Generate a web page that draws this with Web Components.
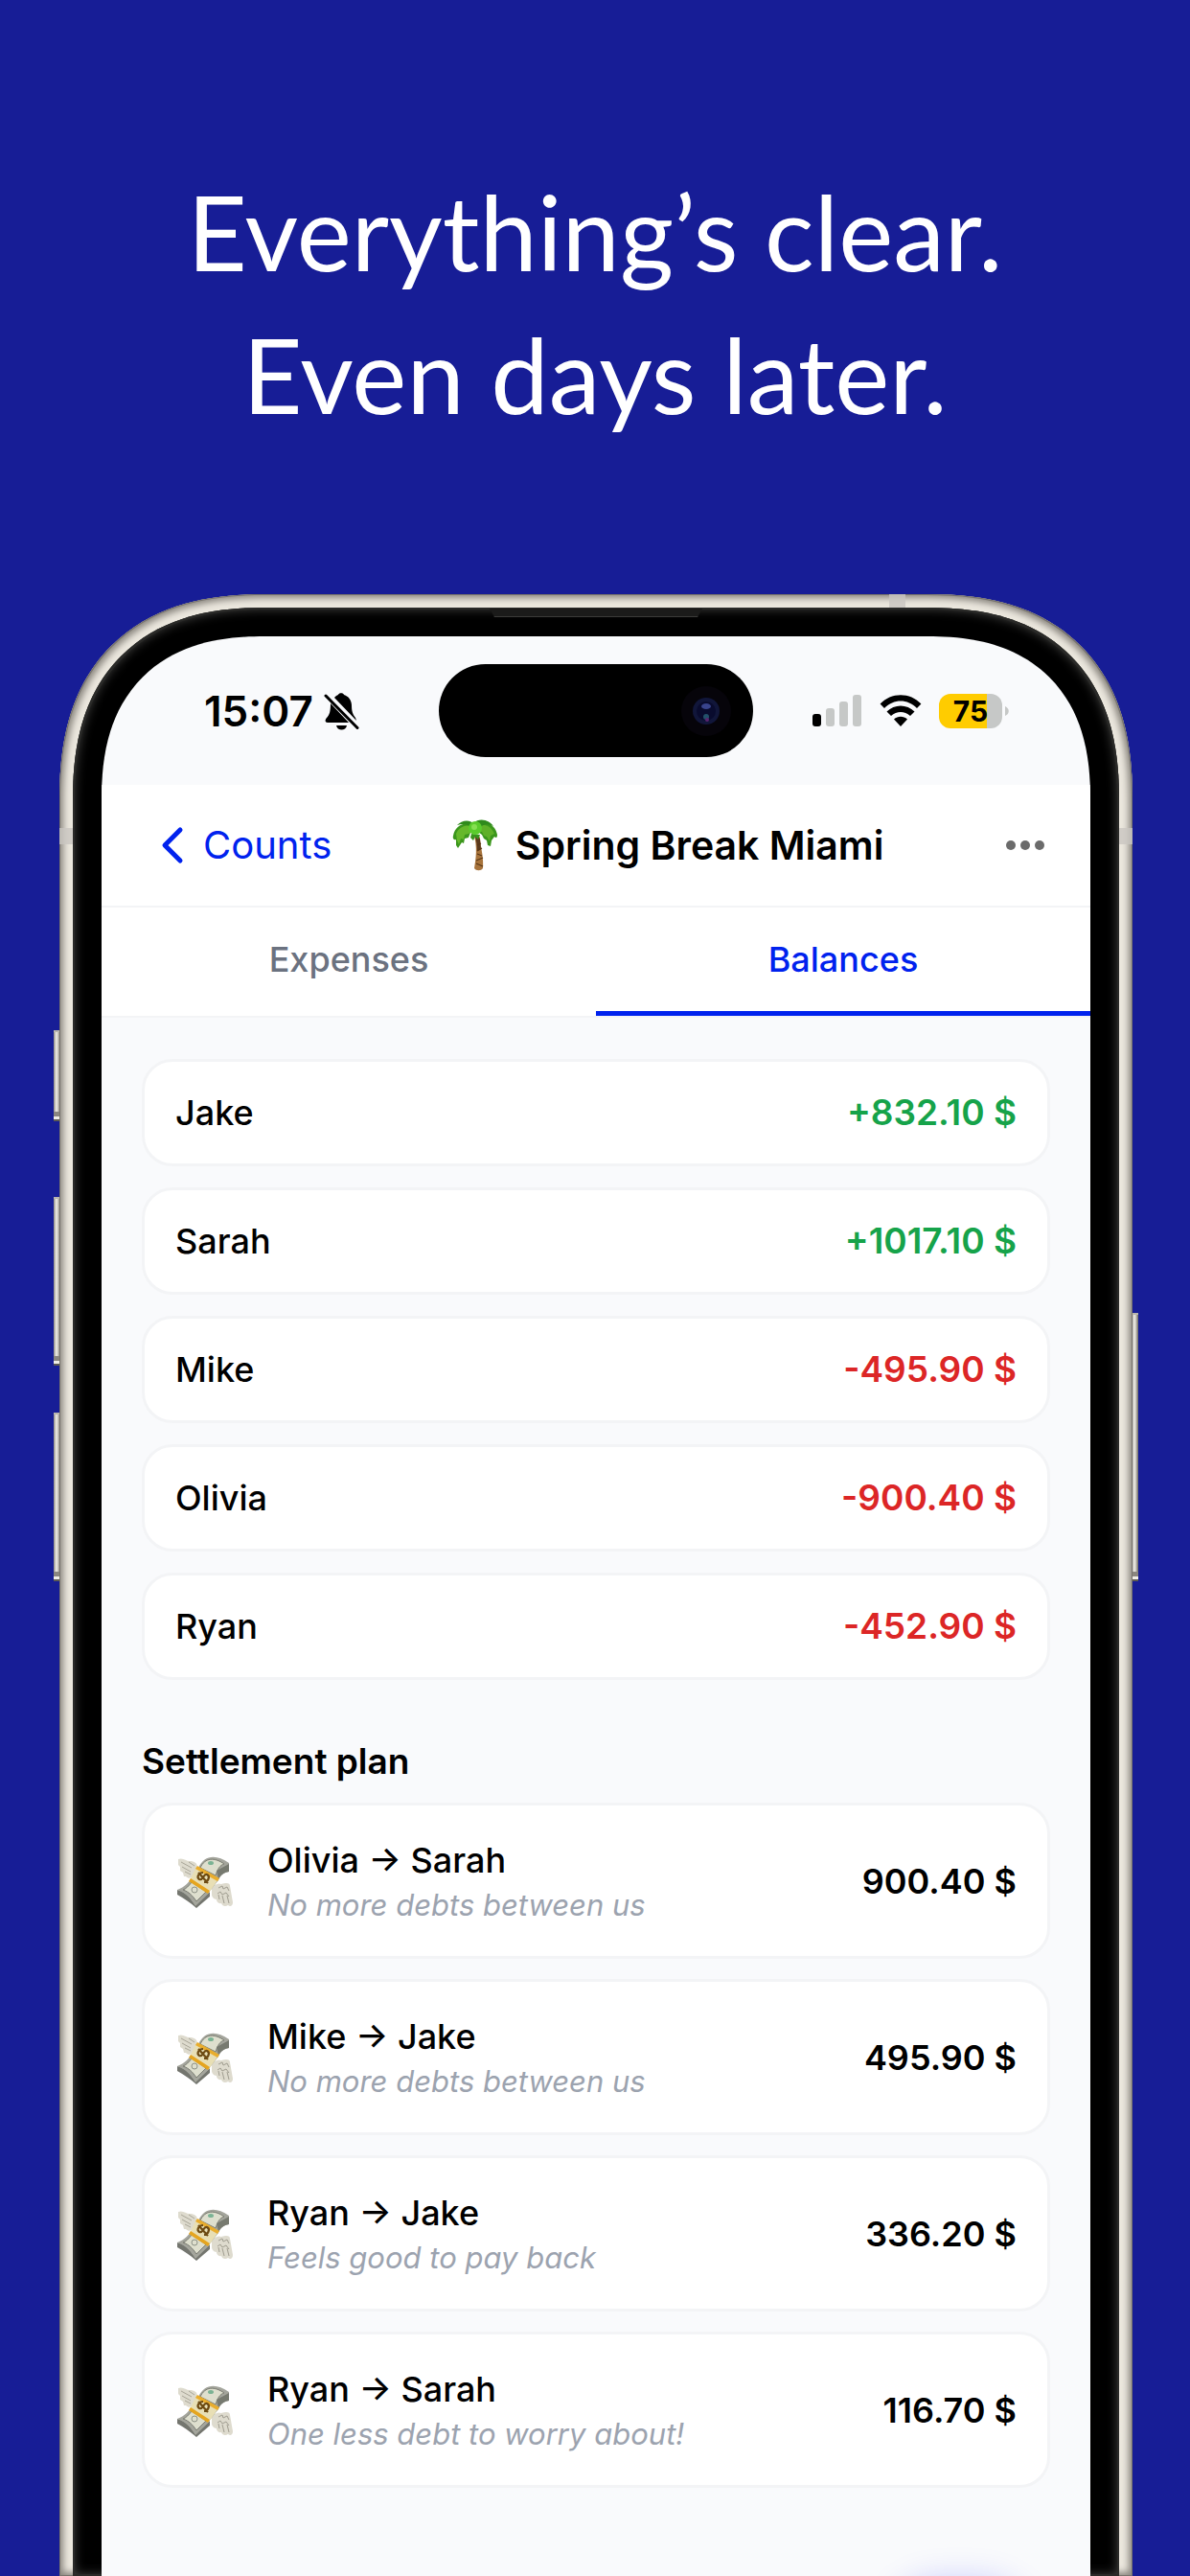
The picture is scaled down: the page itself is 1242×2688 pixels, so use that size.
<!DOCTYPE html>
<html lang="en">
<head>
<meta charset="utf-8">
<meta name="viewport" content="width=device-width, initial-scale=1">
<title>Spring Break Miami</title>
<style>
  html, body { margin: 0; min-height: 100vh; }
  body {
    display: flex;
    background: #171d96;
    color: #000;
    font-family: Inter, "Liberation Sans", sans-serif;
  }
</style>
</head>
<body>
<promo-page></promo-page>

<script>
class PromoPage extends HTMLElement {
  constructor() {
    super();
    this.attachShadow({ mode: 'open' });
    this.shadowRoot.innerHTML = `
      <style>
        :host { display: flex; flex-direction: column; flex: 1; height: 100vh; overflow: hidden; }
        h1 {
          margin: 0;
          padding: 167px 40px 155px;
          color: #fff;
          font: 400 108px/149px Lato, "Open Sans", sans-serif;
          text-align: center;
        }
        main { flex: 1; padding: 43px 42px 0; }
        ul { display: flex; flex-direction: column; gap: 21px; margin: 0; padding: 0; list-style: none; }
        .balances { gap: 22px; }
        h2 { margin: 62px 0 20px; font-size: 37px; line-height: 46px; font-weight: 600; }
      </style>
      <h1>Everything’s clear.<br>Even days later.</h1>
      <phone-frame>
        <status-bar time="15:07" battery="75"></status-bar>
        <nav-header back="Counts">Spring Break Miami</nav-header>
        <tab-bar></tab-bar>
        <main>
          <ul class="balances">
            <li><balance-row amount="+832.10 $">Jake</balance-row></li>
            <li><balance-row amount="+1017.10 $">Sarah</balance-row></li>
            <li><balance-row amount="-495.90 $">Mike</balance-row></li>
            <li><balance-row amount="-900.40 $">Olivia</balance-row></li>
            <li><balance-row amount="-452.90 $">Ryan</balance-row></li>
          </ul>
          <h2>Settlement plan</h2>
          <ul>
            <li><settlement-row amount="900.40 $" note="No more debts between us">Olivia → Sarah</settlement-row></li>
            <li><settlement-row amount="495.90 $" note="No more debts between us">Mike → Jake</settlement-row></li>
            <li><settlement-row amount="336.20 $" note="Feels good to pay back">Ryan → Jake</settlement-row></li>
            <li><settlement-row amount="116.70 $" note="One less debt to worry about!">Ryan → Sarah</settlement-row></li>
          </ul>
        </main>
      </phone-frame>
    `;
  }
}

class PhoneFrame extends HTMLElement {
  constructor() {
    super();
    this.attachShadow({ mode: 'open' });
    this.shadowRoot.innerHTML = `
      <style>
        :host { position: relative; display: flex; flex: 1; margin: 0 60px 0 62px; }
        .body, .bezel, .screen { display: flex; flex: 1; flex-direction: column; }
        .body {
          position: relative;
          padding: 14px 14px 0;
          border-radius: 185px 185px 0 0;
          background: #ebe7de;
          box-shadow: inset 0 0 0 1px #77736d, inset 0 0 7px 4px #8a867f;
        }
        .bezel {
          position: relative;
          padding: 30px 30px 0;
          border-radius: 171px 171px 0 0;
          background: #000;
          box-shadow: inset 0 0 0 2px #2a2a28, inset 0 0 12px 1px #4a4a48;
        }
        .screen {
          position: relative;
          border-radius: 140px 140px 0 0;
          overflow: hidden;
          background: #f9fafc;
        }
        @supports (corner-shape: superellipse(1.2)) {
          .body { border-radius: 215px 215px 0 0; corner-shape: superellipse(1.26); }
          .bezel { border-radius: 201px 201px 0 0; corner-shape: superellipse(1.26); }
          .screen { border-radius: 170px 170px 0 0; corner-shape: superellipse(1.26); }
        }
        .key {
          position: absolute;
          width: 7px;
          background: linear-gradient(90deg, #8d8983, #efede6 40%, #d5d2ca 60%, #6d6963);
          box-shadow: inset 0 2px 0 #b9b6ae, inset 0 -2px 0 #5c5954, inset 0 -5px 0 #efede6, inset 0 -10px 0 #8a867f;
        }
        .left { left: -6px; }
        .right { right: -6px; }
        .mute { top: 455px; height: 95px; }
        .up { top: 629px; height: 176px; }
        .down { top: 854px; height: 176px; }
        .power { top: 750px; height: 280px; }
        .band { position: absolute; background: #c9c6c0cc; }
        .band.top { top: 0; right: 237px; width: 17px; height: 14px; }
        .band.west { left: 0; top: 244px; width: 14px; height: 17px; }
        .band.east { right: 0; top: 244px; width: 14px; height: 17px; }
        .speaker {
          position: absolute;
          top: 1px;
          left: 50%;
          width: 222px;
          height: 8px;
          margin-left: -111px;
          background: #1b1b1a;
          border-bottom: 1px solid #3b3b39;
          clip-path: polygon(0 0, 100% 0, calc(100% - 5px) 100%, 5px 100%);
        }
        /* glow of the floating button that sits under the fold */
        .glow {
          position: absolute;
          right: 64px;
          bottom: -110px;
          width: 146px;
          height: 104px;
          border-radius: 73px;
          box-shadow: 0 0 34px #1f2fff40;
        }
      </style>
      <span class="key left mute"></span>
      <span class="key left up"></span>
      <span class="key left down"></span>
      <span class="key right power"></span>
      <div class="body">
        <span class="band top"></span>
        <span class="band west"></span>
        <span class="band east"></span>
        <div class="bezel">
          <span class="speaker"></span>
          <div class="screen"><slot></slot><span class="glow"></span></div>
        </div>
      </div>
    `;
  }
}

class StatusBar extends HTMLElement {
  connectedCallback() {
    this.attachShadow({ mode: 'open' });
    this.shadowRoot.innerHTML = `
      <style>
        :host {
          display: grid;
          grid-template-columns: 1fr 328px 1fr;
          align-items: center;
          height: 155px;
        }
        .clock { display: flex; align-items: center; gap: 10px; padding-left: 107px; }
        time { font-size: 44px; line-height: 48px; font-weight: 600; }
        .island { display: flex; align-items: center; justify-content: flex-end; height: 97px; padding-right: 22px; border-radius: 49px; background: #000; }
        .signals { display: flex; align-items: center; justify-content: flex-end; padding-right: 85px; }
        svg { display: block; flex: none; }
        .bars { margin-right: 19px; }
        .wifi { margin-right: 18px; }
        .battery {
          width: 66px;
          border-radius: 12px;
          background: linear-gradient(90deg, #ffcc00 50px, #c6c8c7 50px);
          font-size: 30px;
          line-height: 36px;
          font-weight: 700;
          text-align: center;
        }
        .nub { margin-left: 3px; }
      </style>
      <div class="clock">
        <time>${this.getAttribute('time')}</time>
        <svg width="38" height="40" viewBox="0 0 38 40">
          <path d="M12 6C13 4.500 14.500 3.500 16 3C16.500 0.500 21.500 0.500 22 3C27 4.500 30 9 30 14C30 20 31 23 34 27L35 30Z"/>
          <path d="M8 12L27 32H5C2 32 2 29 4 27C7 24 8 20 8 12Z"/>
          <path d="M14 35H25C24 41 15 41 14 35Z"/>
          <path d="M3 4L36 37.500" stroke="#000" stroke-width="3" stroke-linecap="round"/>
        </svg>
      </div>
      <div class="island">
        <svg width="54" height="54" viewBox="0 0 54 54">
          <circle cx="27" cy="27" r="26" fill="#06040a"/>
          <circle cx="27" cy="27" r="14" fill="#11163a"/>
          <circle cx="27" cy="27" r="10" fill="#090b2e"/>
          <ellipse cx="27" cy="22" rx="5" ry="3" fill="#39448c"/>
          <circle cx="27" cy="33" r="3" fill="#22506a"/>
          <circle cx="28" cy="36" r="2" fill="#5a2470"/>
        </svg>
      </div>
      <div class="signals">
        <svg class="bars" width="51" height="33" viewBox="0 0 51 33">
          <rect y="20" width="9" height="13" rx="3"/>
          <g fill="#c6c8c7">
            <rect x="14" y="14" width="9" height="19" rx="3"/>
            <rect x="28" y="7" width="9" height="26" rx="3"/>
            <rect x="42" width="9" height="33" rx="3"/>
          </g>
        </svg>
        <svg class="wifi" width="44" height="33" viewBox="0 0 44 33">
          <path d="M0.600 9.500C12-3 32-3 43.400 9.500L39 14C29.500 4 14.500 4 5 14Z"/>
          <path d="M7.500 17.500C15.500 9.500 28.500 9.500 36.500 17.500L32 22C26 16.500 18 16.500 12 22Z"/>
          <path d="M15 25.500C19 21.800 25 21.800 29 25.500L22 33Z"/>
        </svg>
        <div class="battery">${this.getAttribute('battery')}</div>
        <svg class="nub" width="4" height="12" viewBox="0 0 4 12"><path d="M0 1C5 3 5 9 0 11Z" fill="#c6c8c7"/></svg>
      </div>
    `;
  }
}

class NavHeader extends HTMLElement {
  connectedCallback() {
    this.attachShadow({ mode: 'open' });
    this.shadowRoot.innerHTML = `
      <style>
        :host {
          display: flex;
          justify-content: space-between;
          align-items: center;
          height: 126px;
          padding: 0 46px 0 62px;
          border-bottom: 2px solid #f3f4f6;
          background: #fff;
          line-height: 50px;
        }
        svg { display: block; flex: none; }
        a { display: flex; align-items: center; gap: 20px; color: #0022ee; font-size: 40px; text-decoration: none; }
        .title { display: flex; align-items: center; gap: 18px; font-size: 41px; font-weight: 600; }
        button { padding: 0; border: 0; background: none; }
      </style>
      <a href="#counts">
        <svg width="24" height="40" viewBox="0 0 24 40"><path d="M20 4L4 20L20 36" fill="none" stroke="currentColor" stroke-width="5" stroke-linecap="round" stroke-linejoin="round"/></svg>
        ${this.getAttribute('back')}
      </a>
      <div class="title">
        <svg width="48" height="54" viewBox="0 0 48 54">
          <path d="M23 17C27 16 29 17 29 20C30 31 33 40 32 51C30 54 25 54 23 51C25 40 26 29 23 17Z" fill="#a8743c"/>
          <path d="M24 18C27 17 28 18 29 21L30 31L26 33C26 27 25 22 24 18Z" fill="#5b3a1e"/>
          <path d="M26 27L30 25M26 33L31 30M26 36L31 38M25 43L32 40M25 46L32 49" stroke="#5a3715" stroke-width="1.300"/>
          <path d="M24 9C16 0 3 5 1 17C0 20 2 22 4 21L4 27L6 30L10 24L12 25L13 20L17 19L20 11Z" fill="#3b961c"/>
          <path d="M22 8C14 4 7 8 4 15L5 22L7 26L9 20L12 21L13 16L17 15L22 13Z" fill="#66b82b"/>
          <path d="M24 9C33-1 45 5 47 16C47 19 46 20 44 18L41 22L40 28L37 27L36 22L33 20L31 16L27 13Z" fill="#3b961c"/>
          <path d="M26 8C35 3 41 8 44 15L40 17L39 23L36 18L33 17L31 13L27 13Z" fill="#5fb028"/>
          <path d="M22 4C28-2 38 0 43 7C36 4 32 5 27 10Z" fill="#2f8a1c"/>
          <path d="M24 6C18-1 10 1 5 6C12 4 17 5 21 10Z" fill="#2f8a1c"/>
          <path d="M20 15L19 19L22 22L24 18L27 21L29 16Z" fill="#37941c"/>
          <circle cx="24" cy="9" r="7" fill="#5acb2c"/>
          <circle cx="23" cy="8" r="3" fill="#86e052"/>
        </svg>
        <slot></slot>
      </div>
      <button aria-label="More">
        <svg width="44" height="40" viewBox="0 0 44 40" fill="#6b6b6b"><circle cx="7" cy="20" r="5"/><circle cx="22" cy="20" r="5"/><circle cx="37" cy="20" r="5"/></svg>
      </button>
    `;
  }
}

class TabBar extends HTMLElement {
  constructor() {
    super();
    this.attachShadow({ mode: 'open' });
    this.shadowRoot.innerHTML = `
      <style>
        :host { display: flex; border-bottom: 2px solid #f3f4f6; background: #fff; }
        button {
          flex: 1;
          height: 113px;
          padding: 0;
          border: 0;
          border-bottom: 5px solid transparent;
          background: none;
          color: #6b7280;
          font: inherit;
          font-size: 36px;
          line-height: 44px;
          font-weight: 500;
        }
        .active { border-color: #0022ee; color: #0022ee; }
      </style>
      <button>Expenses</button>
      <button class="active">Balances</button>
    `;
  }
}

class BalanceRow extends HTMLElement {
  connectedCallback() {
    const amount = this.getAttribute('amount');
    const color = amount.startsWith('+') ? '#16a34a' : '#dc2626';
    this.attachShadow({ mode: 'open' });
    this.shadowRoot.innerHTML = `
      <style>
        :host {
          display: flex;
          align-items: center;
          justify-content: space-between;
          height: 106px;
          padding: 0 32px;
          border: 3px solid #f3f4f6;
          border-radius: 32px;
          background: #fff;
          font-size: 36px;
          line-height: 44px;
          font-weight: 500;
        }
        .amount { color: ${color}; font-size: 37px; font-weight: 600; }
      </style>
      <span><slot></slot></span>
      <span class="amount">${amount}</span>
    `;
  }
}

class SettlementRow extends HTMLElement {
  connectedCallback() {
    this.attachShadow({ mode: 'open' });
    this.shadowRoot.innerHTML = `
      <style>
        :host {
          display: flex;
          align-items: center;
          gap: 36px;
          height: 157px;
          padding: 0 32px;
          border: 3px solid #f3f4f6;
          border-radius: 32px;
          background: #fff;
          font-size: 36px;
          font-weight: 500;
        }
        svg { display: block; flex: none; }
        .text { flex: 1; line-height: 50px; }
        .note { color: #9ca3af; font-size: 31px; line-height: 44px; font-weight: 400; font-style: italic; }
        .amount { font-weight: 600; }
      </style>
      <svg width="60" height="56" viewBox="0 0 60 56">
        <path d="M3 5C8 3 11 7 15 7C20 7 23 9 23 14L19 21C17 25 14 26 11 23L9 23L8 19L5 17L5 13L3 11Z" fill="#dedbce"/>
        <path d="M6 8L17 14M7 13L16 18M10 18L16 21M14 8L20 12" stroke="#a9a698" fill="none"/>
        <path d="M38 33C42 33 43 29 48 31C54 29 57 30 57 33L60 50C60 54 57 55 55 53C52 55 49 54 48 51C45 52 43 49 43 47C40 47 38 44 38 42Z" fill="#dedbce"/>
        <path d="M45 35L49 33L50 36L54 34L56 38M44 41L47 39L49 42L53 40L56 44M46 47L45 42M51 51L49 43M56 51L54 43" stroke="#a09d90" fill="none"/>
        <path d="M2 37C10 39 14 43 21 53L36 39V44L22 56C15 50 9 46 2 42Z" fill="#74766f"/>
        <path d="M24 14C30 1 42-1 56 9V18C50 19 47 22 45 27C38 36 32 44 21 54C15 44 10 40 2 37C10 34 14 29 16 26Z" fill="#a4a59c"/>
        <path d="M26 14C31 3 41 3 51 10C47 11 44 15 42 22Z" fill="#dedfce" stroke="#7c7e74"/>
        <path d="M17 29C14 33 11 36 8 37C14 39 18 43 22 49L32 39Z" fill="#dedfce" stroke="#7c7e74"/>
        <path d="M43 17L56 10V18C50 19 47 22 45 26Z" fill="#777a70"/>
        <ellipse cx="37" cy="9" rx="3" ry="2" fill="#7bb394"/>
        <circle cx="20" cy="37" r="3" fill="none" stroke="#8c9185"/>
        <path d="M22 13L45 26L35 40L15 27Z" fill="#e8dfb5"/>
        <path d="M23 12L46 25L44 28L21 15Z" fill="#e9ad2d"/>
        <path d="M16 25L36 38L34 41L14 28Z" fill="#e5a51f"/>
        <path d="M29 19C24 19 22 24 25 26C29 28 29 20 33 21C37 23 34 29 30 29M24 19L34 30" fill="none" stroke="#6d4b13" stroke-width="2.200"/>
      </svg>
      <div class="text">
        <div><slot></slot></div>
        <div class="note">${this.getAttribute('note')}</div>
      </div>
      <span class="amount">${this.getAttribute('amount')}</span>
    `;
  }
}

customElements.define('status-bar', StatusBar);
customElements.define('nav-header', NavHeader);
customElements.define('tab-bar', TabBar);
customElements.define('balance-row', BalanceRow);
customElements.define('settlement-row', SettlementRow);
customElements.define('phone-frame', PhoneFrame);
customElements.define('promo-page', PromoPage);
</script>
</body>
</html>
